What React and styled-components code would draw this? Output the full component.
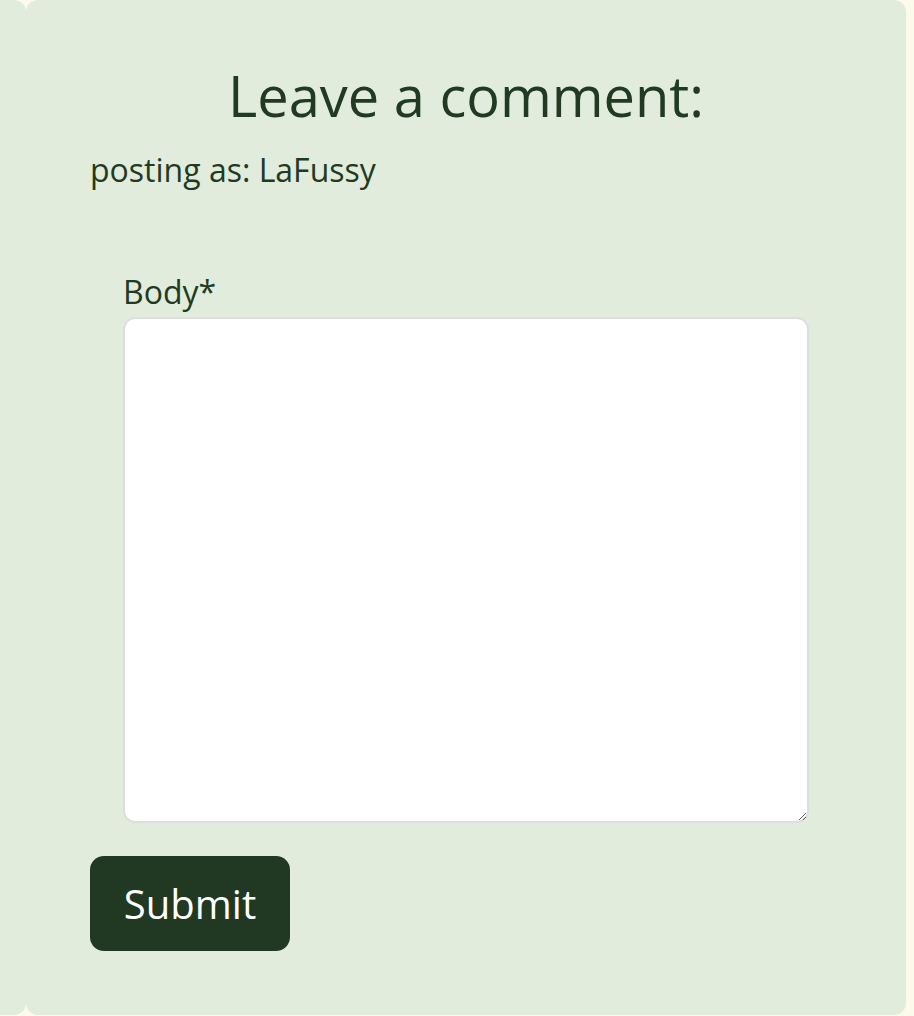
import React from 'react'
import styled, { createGlobalStyle } from 'styled-components'

const GlobalStyle = createGlobalStyle`
  html, body {
    margin: 0;
    padding: 0;
    background: #fcfaea;
    font-family: 'Open Sans', 'Noto Sans', sans-serif;
    color: #213a22;
  }
`

const Page = styled.div`
  display: flex;
  align-items: stretch;
  width: 906px;
`

const SideCard = styled.div`
  flex: 0 0 26px;
  background: #e1ecdd;
  border-radius: 0 12px 12px 0;
`

const Card = styled.section`
  flex: 1;
  box-sizing: border-box;
  padding: 57px 64px 64px;
  background: #e1ecdd;
  border-radius: 12px;
`

const Title = styled.h2`
  margin: 0 0 15px;
  font-size: 56px;
  font-weight: 400;
  line-height: 76px;
  text-align: center;
`

const PostingAs = styled.p`
  margin: 0 0 78px;
  font-size: 32px;
  line-height: 44px;
`

const Field = styled.div`
  display: flex;
  flex-direction: column;
  gap: 3px;
  margin: 0 33px 33px;
`

const Label = styled.label`
  font-size: 32px;
  line-height: 44px;
`

const TextArea = styled.textarea`
  box-sizing: border-box;
  width: 100%;
  height: 506px;
  padding: 12px 16px;
  font-family: inherit;
  font-size: 32px;
  color: #213a22;
  background: #ffffff;
  border: 2px solid #dcdfde;
  border-radius: 12px;
  outline: none;
`

const SubmitButton = styled.button`
  width: 200px;
  height: 95px;
  padding: 0;
  font-family: inherit;
  font-size: 40px;
  color: #ffffff;
  background: #213822;
  border: 0;
  border-radius: 14px;
  cursor: pointer;
`

const App = () => (
  <>
    <GlobalStyle />
    <Page>
      <SideCard />
      <Card>
        <Title>Leave a comment:</Title>
        <PostingAs>posting as: LaFussy</PostingAs>
        <form onSubmit={(e) => e.preventDefault()}>
          <Field>
            <Label htmlFor='id_body'>Body*</Label>
            <TextArea id='id_body' name='body' />
          </Field>
          <SubmitButton type='submit'>Submit</SubmitButton>
        </form>
      </Card>
    </Page>
  </>
)

export default App
